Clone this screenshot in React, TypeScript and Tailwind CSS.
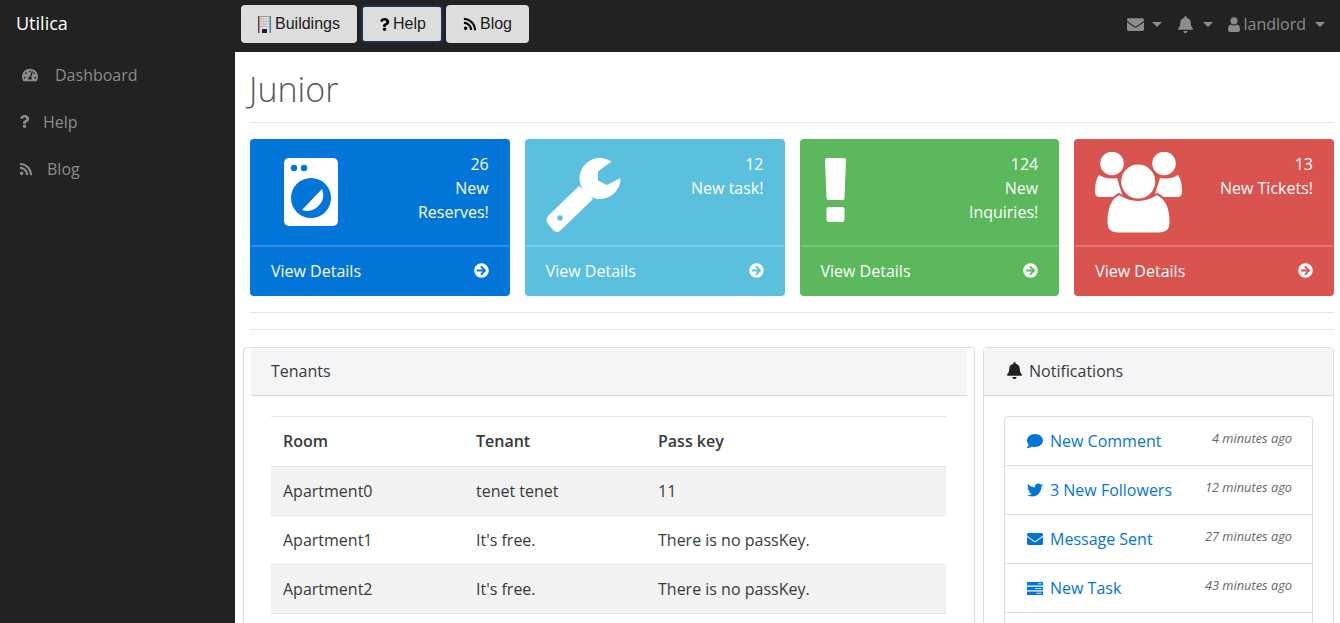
import {
  FaArrowCircleRight,
  FaBell,
  FaComment,
  FaEnvelope,
  FaQuestion,
  FaRss,
  FaTachometerAlt,
  FaTwitter,
} from "react-icons/fa";
import type { ReactNode } from "react";

function BuildingIcon() {
  return (
    <svg width="13" height="17" viewBox="0 0 13 17" className="shrink-0">
      <rect x="1" y="0" width="11" height="17" fill="#e4e0da" />
      <rect x="0" y="0" width="1.500" height="17" fill="#7d2f42" />
      <rect x="11.500" y="0" width="1.500" height="17" fill="#3f7fb5" />
      <rect x="1" y="0" width="11" height="1" fill="#9a9a9a" />
      <path d="M2.500 3h8M2.500 5.500h8M2.500 8h8M2.500 10.500h8" stroke="#8f9fc0" strokeWidth="1.200" strokeDasharray="1.500 1" />
      <path d="M3 3h2M8 5.500h2M5 8h2M3 10.500h2" stroke="#d9a05a" strokeWidth="1.200" />
      <rect x="4" y="13" width="5" height="4" fill="#16223f" />
    </svg>
  );
}

function UserIcon() {
  return (
    <svg width="12" height="15" viewBox="0 0 12 15" className="ml-[15px] shrink-0 fill-[#8c8c8c]">
      <circle cx="6" cy="3.800" r="3.600" />
      <path d="M2.500 7.500 Q6 9.500 9.500 7.500 Q12 8.500 12 12.500 Q12 15 10 15 H2 Q0 15 0 12.500 Q0 8.500 2.500 7.500 Z" />
    </svg>
  );
}

function WasherIcon() {
  return (
    <svg width="54" height="68" viewBox="0 0 54 68" className="ml-[34px] mt-[19px] shrink-0">
      <rect width="54" height="68" rx="5" className="fill-white" />
      <circle cx="10" cy="10" r="3.200" className="fill-[#0275d8]" />
      <circle cx="20" cy="10" r="3.200" className="fill-[#0275d8]" />
      <circle cx="27" cy="40" r="20" className="fill-[#0275d8]" />
      <path d="M38 31 L18 52 A16 16 0 0 0 38 31 Z" className="fill-white" />
    </svg>
  );
}

function WrenchIcon() {
  return (
    <svg width="75" height="75" viewBox="0 0 75 75" className="ml-[21px] mt-[19px] shrink-0">
      <path
        d="M65.500 3.500 L52 13.500 L52 22.500 L61 27 L74.500 20 A20.500 20.500 0 1 1 65.500 3.500 Z"
        className="fill-white"
      />
      <path d="M33 28 L2 58 Q-1 62 2 66 L7 72 Q11 76 15 72 L47 41 Z" className="fill-white" />
      <circle cx="14" cy="60" r="2.700" className="fill-[#5bc0de]" />
    </svg>
  );
}

function ExclamationIcon() {
  return (
    <svg width="21" height="64" viewBox="0 0 21 64" className="ml-[25px] mt-[19px] shrink-0">
      <path
        d="M2 0 H19 Q21 0 21 2 L19.500 40 Q19.500 42 17.500 42 H3.500 Q1.500 42 1.500 40 L0 2 Q0 0 2 0 Z"
        className="fill-white"
      />
      <rect x="1.500" y="49" width="18" height="15" rx="2.500" className="fill-white" />
    </svg>
  );
}

function UsersIcon() {
  return (
    <svg width="88" height="81" viewBox="0 0 88 81" className="ml-[21px] mt-[13px] shrink-0">
      <circle cx="17" cy="11.500" r="11.800" className="fill-white" />
      <circle cx="69" cy="11.500" r="11.800" className="fill-white" />
      <path d="M4 23 Q12 28 22 26 L28 45 H5 Q0 45 0 40 Q0 28 4 23 Z" className="fill-white" />
      <path d="M83 23 Q75 28 65 26 L59 45 H82 Q87 45 87 40 Q87 28 83 23 Z" className="fill-white" />
      <path
        d="M24 42 Q43 54 62 42 Q75.500 48 75.500 70 Q75.500 81.500 64 81.500 H23 Q11.500 81.500 11.500 70 Q11.500 48 24 42 Z"
        strokeWidth="2"
        className="fill-white stroke-[#d9534f]"
      />
      <circle cx="43.200" cy="29.500" r="18" strokeWidth="2" className="fill-white stroke-[#d9534f]" />
    </svg>
  );
}

function TaskIcon() {
  return (
    <svg width="16" height="13" viewBox="0 0 16 13" className="shrink-0">
      <path d="M0 0 H16 V3.400 H0 Z M0 4.800 H16 V8.200 H0 Z M0 9.600 H16 V13 H0 Z" className="fill-[#0275d8]" />
      <path d="M11 1.200 H14.500 V2.200 H11 Z M8 6 H14.500 V7 H8 Z M9.500 10.800 H14.500 V11.800 H9.500 Z" className="fill-[#cfe3f6]" />
    </svg>
  );
}

function Caret() {
  return <span className="inline-block h-0 w-0 border-x-[5px] border-t-[5px] border-x-transparent border-t-[#8c8c8c]" />;
}

const sideLinks = [
  { label: "Dashboard", icon: <FaTachometerAlt size={16} className="ml-[22px]" />, gap: "ml-[17px]" },
  { label: "Help", icon: <FaQuestion size={13} className="ml-[18px]" />, gap: "ml-[12px]" },
  { label: "Blog", icon: <FaRss size={14} className="ml-[19px]" />, gap: "ml-[14px]" },
];

const cards: { bg: string; icon: ReactNode; lines: string[] }[] = [
  { bg: "bg-[#0275d8]", icon: <WasherIcon />, lines: ["26", "New", "Reserves!"] },
  { bg: "bg-[#5bc0de]", icon: <WrenchIcon />, lines: ["12", "New task!"] },
  { bg: "bg-[#5cb85c]", icon: <ExclamationIcon />, lines: ["124", "New", "Inquiries!"] },
  { bg: "bg-[#d9534f]", icon: <UsersIcon />, lines: ["13", "New Tickets!"] },
];

const tenants = [
  { room: "Apartment0", tenant: "tenet tenet", key: "11" },
  { room: "Apartment1", tenant: "It's free.", key: "There is no passKey." },
  { room: "Apartment2", tenant: "It's free.", key: "There is no passKey." },
];

const notifications = [
  { label: "New Comment", time: "4 minutes ago", icon: <FaComment size={16} className="shrink-0" /> },
  { label: "3 New Followers", time: "12 minutes ago", icon: <FaTwitter size={16} className="shrink-0" /> },
  { label: "Message Sent", time: "27 minutes ago", icon: <FaEnvelope size={16} className="shrink-0" /> },
  { label: "New Task", time: "43 minutes ago", icon: <TaskIcon /> },
];

export default function App() {
  return (
    <div className="flex h-[623px] w-[1340px] flex-col overflow-hidden bg-[#222222] font-['Open_Sans',sans-serif] text-base text-[#373a3c]">
      {/* Top bar */}
      <header className="flex h-[52px] shrink-0">
        <div className="flex h-[47px] w-[241px] shrink-0 items-center pl-4 text-[18px] text-white">Utilica</div>
        <nav className="flex items-start gap-[4px] pt-[5px] font-['Liberation_Sans',sans-serif] text-base text-[#1a1a1a]">
          <button className="flex h-[38px] w-[116px] items-center justify-center gap-[4px] rounded bg-[#dddddd]">
            <BuildingIcon />
            Buildings
          </button>
          <button className="flex h-[38px] w-[82px] items-center justify-center gap-[2px] rounded border-2 border-[#1b3550] bg-[#dddddd]">
            <FaQuestion size={13} className="text-black" />
            Help
          </button>
          <button className="-ml-px flex h-[38px] w-[83px] items-center justify-center gap-[3px] rounded bg-[#dddddd]">
            <FaRss size={14} className="text-black" />
            Blog
          </button>
        </nav>
        <div className="ml-auto flex h-[48px] items-center pr-[15px] text-[#8c8c8c]">
          <FaEnvelope size={17} />
          <span className="ml-[8px] flex"><Caret /></span>
          <FaBell size={17} className="ml-[15px]" />
          <span className="ml-[9px] flex"><Caret /></span>
          <UserIcon />
          <span className="ml-[3px]">landlord</span>
          <span className="ml-[9px] flex"><Caret /></span>
        </div>
      </header>

      <div className="flex min-h-0 flex-1">
        {/* Sidebar */}
        <aside className="-mt-px w-[235px] shrink-0 text-[#8c8c8c]">
          {sideLinks.map((link) => (
            <div key={link.label} className="flex h-[47px] items-center">
              {link.icon}
              <span className={link.gap}>{link.label}</span>
            </div>
          ))}
        </aside>

        {/* Main content */}
        <main className="min-w-0 flex-1 bg-white pl-[15px] pr-[6px]">
          <h1 className="-ml-px flex h-[70px] items-center pt-[4px] text-[34px] font-light text-[#55595c]">Junior</h1>
          <div className="mb-4 h-px bg-[#e6e6e6]" />

          <div className="grid grid-cols-4 gap-[15px]">
            {cards.map((card, i) => (
              <div key={i} className={`h-[157px] overflow-hidden rounded text-white ${card.bg}`}>
                <div className="flex h-[106px] justify-between pr-[21px]">
                  {card.icon}
                  <div className="pt-[13px] text-right leading-6">
                    {card.lines.map((line) => (
                      <div key={line}>{line}</div>
                    ))}
                  </div>
                </div>
                <div className="mx-px flex h-[51px] items-center justify-between border-t-2 border-white/20 px-5 pb-[2px]">
                  <span>View Details</span>
                  <FaArrowCircleRight size={15} />
                </div>
              </div>
            ))}
          </div>

          <div className="mt-4 h-px bg-[#e6e6e6]" />
          <div className="mt-4 h-px bg-[#e6e6e6]" />

          <div className="-ml-[7px] mt-[17px] flex gap-2">
            {/* Tenants */}
            <section className="h-[400px] w-[732px] shrink-0 rounded border border-[#dddddd] px-[7px]">
              <div className="flex h-[48px] items-center border-b border-[#d9d9d9] bg-[#f5f5f7] px-5 pb-[2px]">Tenants</div>
              <div className="pl-5 pr-[21px] pt-5">
                <table className="w-full border-collapse text-left">
                  <thead>
                    <tr className="h-[50px] border-t border-[#e6e6e6] font-semibold">
                      <th className="w-[193px] pb-[2px] pl-3 font-semibold">Room</th>
                      <th className="w-[182px] pb-[2px] pl-3 font-semibold">Tenant</th>
                      <th className="pb-[2px] pl-3 font-semibold">Pass key</th>
                    </tr>
                  </thead>
                  <tbody>
                    {tenants.map((row, i) => (
                      <tr key={row.room} className={`h-[49px] border-t border-[#e6e6e6] ${i % 2 === 0 ? "bg-[#f2f2f2]" : ""}`}>
                        <td className="pl-3">{row.room}</td>
                        <td className="pl-3">{row.tenant}</td>
                        <td className="pl-3">{row.key}</td>
                      </tr>
                    ))}
                    <tr className="h-[49px] border-t border-[#e6e6e6]">
                      <td colSpan={3} />
                    </tr>
                  </tbody>
                </table>
              </div>
            </section>

            {/* Notifications */}
            <section className="h-[400px] min-w-0 flex-1 rounded border border-[#dddddd]">
              <div className="flex h-[48px] items-center gap-[6px] border-b border-[#d9d9d9] bg-[#f5f5f7] pb-[2px] pl-[22px]">
                <FaBell size={17} className="text-[#222222]" />
                Notifications
              </div>
              <div className="px-5 pt-5">
                <ul className="rounded border border-[#dddddd]">
                  {notifications.map((item) => (
                    <li key={item.label} className="flex h-[49px] items-center justify-between border-b border-[#dddddd] pl-[22px] pr-5">
                      <span className="flex items-center gap-[7px] text-[#0275d8]">
                        {item.icon}
                        {item.label}
                      </span>
                      <em className="-mt-[5px] text-[12.8px] text-[#666666]">{item.time}</em>
                    </li>
                  ))}
                  <li className="h-[49px]" />
                </ul>
              </div>
            </section>
          </div>
        </main>
      </div>
    </div>
  );
}
